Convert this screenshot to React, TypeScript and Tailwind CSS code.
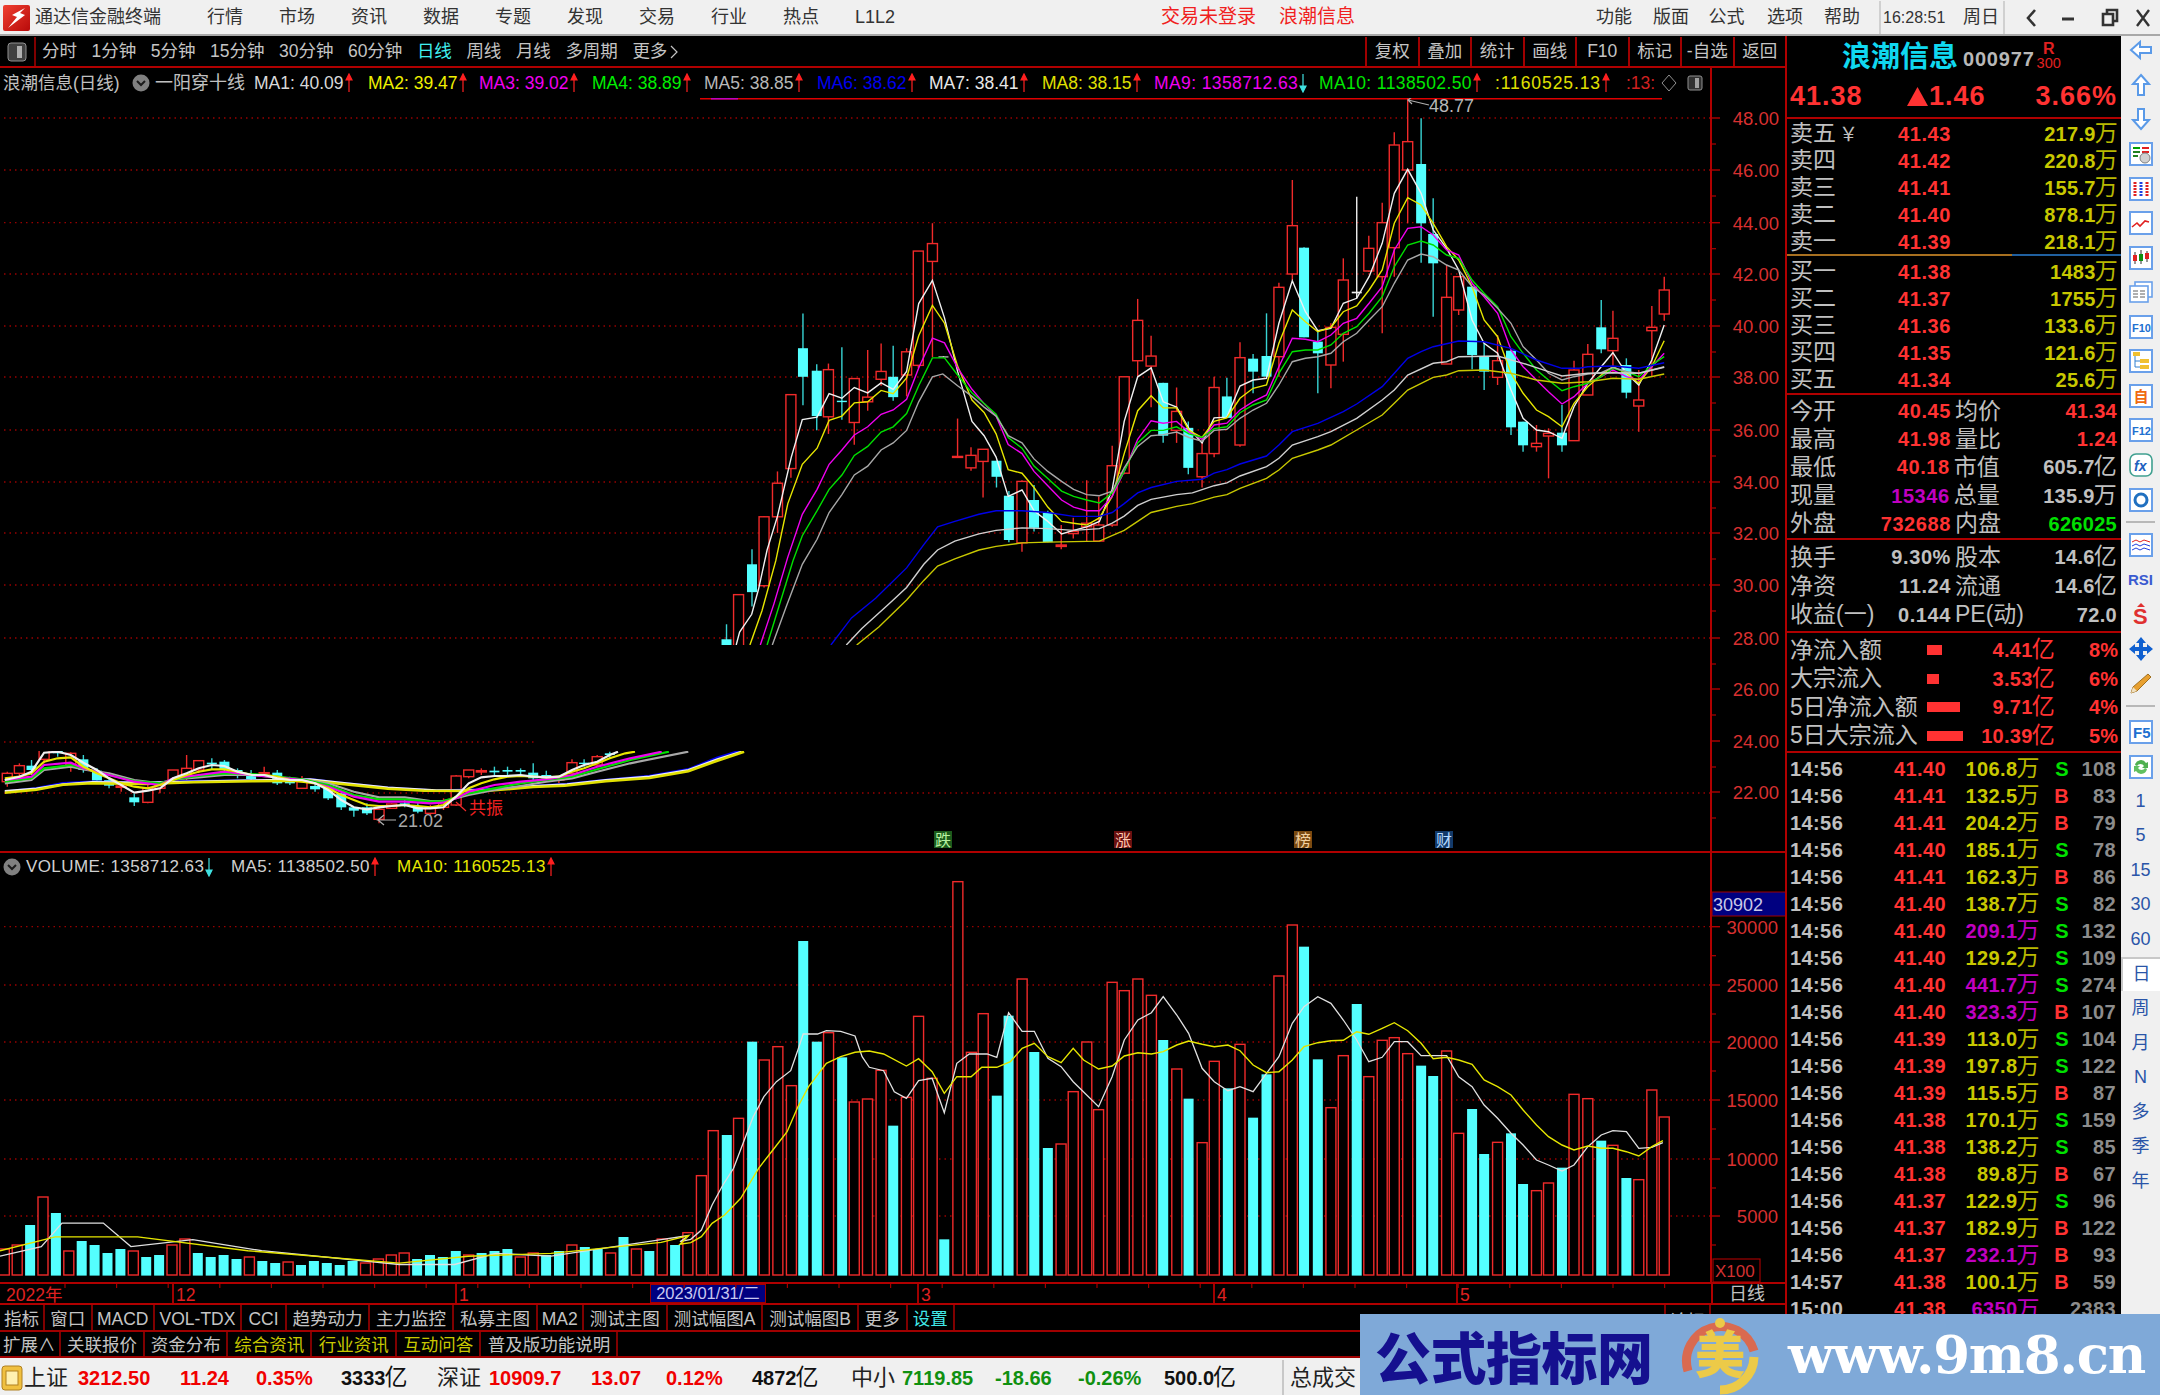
import React from "react";

type P = [number, number];
type C = [number, number, number, number, number, string];
const z8 = (p: number[]): P => [700 + p[0] / 2.904, 100 + p[1] / 2.8];
const z9 = (p: number[]): P => [1240 + p[0] / 2.904, 90 + p[1] / 3];
const z10 = (p: number[]): P => [p[0] / 2.063, 720 + p[1] / 3];
const z11 = (p: number[]): P => [680 + p[0] / 2.8, 860 + p[1] / 3];
const z12 = (p: number[]): P => [1240 + p[0] / 2.904, 860 + p[1] / 3];
const pairs = (a: number[]) => { const o: number[][] = []; for (let i = 0; i < a.length; i += 2) o.push([a[i], a[i + 1]]); return o; };
const pts = (l: P[]) => l.map((p) => p[0].toFixed(1) + "," + p[1].toFixed(1)).join(" ");

const RED = "#f02a2a";
const CY = "#54ffff";

const c8: C[] = [
  [77,1468,1510,1526,1526,"c"],[112,1385,1385,1540,1540,"r"],[151,1258,1300,1378,1418,"c"],[186,1165,1167,1360,1365,"r"],[225,1040,1073,1167,1212,"r"],[264,825,825,1032,1058,"r"],[299,598,695,775,855,"c"],[339,740,758,885,925,"c"],[373,738,755,887,935,"r"],[412,692,842,846,895,"c"],[448,780,780,903,965,"r"],[487,700,832,845,870,"r"],[526,682,760,782,800,"r"],[561,688,775,832,842,"c"],[600,695,705,770,830,"r"],[634,423,423,743,750,"r"],[675,345,402,452,720,"r"],[707,718,718,720,720,"w"],[748,892,998,1000,1000,"r"],[787,972,995,1030,1038,"r"],[822,978,978,1012,1113,"r"],[861,1010,1010,1055,1085,"c"],[897,1095,1108,1232,1238,"c"],[935,1065,1068,1240,1265,"r"],[970,1078,1120,1198,1208,"c"],[1010,1150,1155,1238,1238,"c"],[1049,1190,1246,1250,1258,"r"],[1084,1170,1208,1214,1228,"r"],[1123,1065,1185,1195,1235,"r"],[1158,1110,1190,1235,1235,"r"],[1197,968,1024,1190,1195,"r"],[1232,775,775,1045,1048,"r"],[1271,557,617,730,775,"r"],[1310,660,717,745,860,"r"],[1345,792,792,940,960,"c"],[1384,805,872,925,960,"r"],[1418,900,918,1030,1048,"c"],[1458,960,990,1055,1085,"r"],[1493,775,805,990,1000,"r"],[1530,778,830,890,890,"c"],
];
const c9: C[] = [
  [0,757,803,1065,1070,"r"],[38,792,806,845,910,"c"],[77,670,798,860,860,"c"],[113,578,592,800,860,"r"],[152,270,407,552,570,"r"],[186,472,473,742,742,"c"],[226,725,755,790,910,"c"],[264,700,712,825,895,"r"],[300,505,570,733,815,"r"],[339,320,605,610,625,"w"],[374,437,475,543,545,"r"],[413,338,398,560,730,"r"],[448,127,165,473,560,"r"],[487,25,155,240,400,"r"],[526,85,222,400,518,"c"],[561,325,432,520,680,"c"],[600,525,622,822,822,"r"],[635,560,560,660,675,"r"],[674,590,590,795,838,"c"],[709,760,800,845,900,"c"],[748,735,812,862,885,"r"],[787,780,782,1012,1035,"c"],[822,995,995,1066,1085,"c"],[861,1005,1060,1070,1085,"r"],[896,1015,1030,1038,1165,"r"],[935,945,1028,1066,1085,"c"],[970,812,840,1052,1052,"r"],[1010,762,793,915,915,"r"],[1049,630,712,778,790,"c"],[1083,662,745,782,850,"r"],[1122,805,825,908,925,"c"],[1158,840,930,948,1025,"r"],[1196,648,712,722,860,"r"],[1232,560,600,672,692,"r"],
];
const c10: C[] = [
  [15,155,160,185,200,"r"],[40,130,137,160,175,"r"],[65,120,137,150,165,"c"],[91,35,42,118,130,"r"],[119,40,65,100,110,"c"],[146,97,100,135,155,"r"],[172,105,118,150,158,"c"],[200,145,152,182,190,"c"],[225,175,180,197,205,"c"],[250,190,198,202,215,"r"],[277,222,232,247,258,"c"],[305,195,205,247,250,"r"],[330,190,195,205,220,"r"],[357,150,150,180,190,"r"],[385,105,145,165,180,"r"],[410,120,122,150,160,"r"],[437,115,128,133,150,"c"],[463,120,125,150,155,"c"],[490,145,150,162,175,"c"],[518,150,165,177,180,"c"],[545,140,158,162,170,"r"],[572,150,158,190,195,"c"],[598,170,178,190,195,"c"],[623,168,185,205,205,"r"],[650,185,198,208,215,"c"],[677,195,205,235,240,"c"],[704,220,220,262,270,"c"],[730,262,262,272,290,"c"],[757,250,262,280,285,"c"],[782,265,268,298,310,"r"],[808,250,252,265,265,"r"],[835,240,250,258,262,"c"],[862,250,258,275,280,"c"],[888,255,265,280,285,"r"],[915,235,245,262,270,"r"],[941,165,168,255,258,"r"],[967,150,150,170,175,"r"],[993,145,152,156,165,"r"],[1020,140,152,157,165,"c"],[1047,140,150,155,165,"c"],[1074,145,150,155,162,"c"],[1100,130,158,175,180,"c"],[1127,152,165,175,180,"c"],[1153,170,175,180,190,"r"],[1180,118,128,160,170,"r"],[1205,118,128,132,140,"c"],[1232,105,110,135,140,"r"],[1258,95,100,105,115,"c"],
];

const lines: { c: string; a: number[]; b: number[] }[] = [
  { c: "#f0f0f0", a: [105,1526,115,1490,150,1440,170,1370,195,1260,225,1165,265,1000,297,895,340,888,375,822,412,835,448,805,487,820,526,792,561,810,600,760,635,570,675,505,710,610,748,760,790,900,825,940,860,1000,895,1110,935,1092,970,1150,1010,1180,1050,1215,1085,1205,1123,1195,1160,1180,1197,1090,1232,900,1271,775,1310,750,1345,845,1384,860,1420,920,1458,960,1493,890,1530,888], b: [0,888,38,870,77,865,113,700,152,572,190,665,226,722,264,715,300,640,339,625,375,560,413,460,448,310,487,238,526,310,561,420,600,475,635,540,674,690,709,760,748,790,787,900,822,985,861,1020,896,1025,935,1045,970,950,1010,880,1049,830,1083,788,1122,850,1158,885,1196,810,1232,705] },
  { c: "#e6e600", a: [145,1526,180,1430,220,1290,255,1130,297,1020,340,975,375,897,412,885,448,848,487,845,526,813,561,822,600,778,635,660,675,575,710,625,748,745,790,840,825,875,860,935,895,1035,935,1045,970,1085,1010,1140,1050,1180,1085,1185,1123,1190,1160,1170,1197,1110,1232,990,1271,870,1310,828,1345,862,1384,862,1420,925,1458,945,1493,900,1530,890], b: [0,925,38,895,77,885,113,760,152,660,190,695,226,725,264,712,300,665,339,648,375,600,413,540,448,400,487,323,526,345,561,400,600,470,635,510,674,590,709,690,748,740,787,850,822,910,861,960,896,980,935,1010,970,940,1010,890,1049,855,1083,830,1122,850,1158,880,1196,830,1232,752] },
  { c: "#f000f0", a: [175,1526,215,1410,255,1280,297,1160,340,1090,375,1020,412,980,448,938,487,915,526,880,561,868,600,838,635,750,675,667,710,680,748,750,790,810,825,850,860,885,895,965,935,990,970,1040,1010,1080,1050,1120,1085,1140,1123,1150,1160,1150,1197,1110,1232,1040,1271,950,1310,898,1345,905,1384,900,1420,930,1458,950,1493,910,1530,905], b: [0,960,38,935,77,915,113,830,152,745,190,748,226,755,264,735,300,700,339,685,375,640,413,590,448,480,487,415,526,410,561,435,600,480,635,495,674,580,709,620,748,670,787,780,822,830,861,870,896,905,935,942,970,920,1010,880,1049,860,1083,840,1122,860,1158,870,1196,830,1232,790] },
  { c: "#00e000", a: [195,1526,235,1400,270,1290,297,1220,340,1150,375,1090,412,1050,448,995,487,970,526,930,561,915,600,878,635,800,675,722,710,722,748,770,790,820,825,850,860,880,895,945,935,975,970,1025,1010,1060,1050,1095,1085,1110,1123,1120,1160,1128,1197,1100,1232,1040,1271,960,1310,925,1345,925,1384,915,1420,935,1458,945,1493,920,1530,915], b: [0,968,38,945,77,930,113,850,152,785,190,780,226,780,264,765,300,730,339,710,375,670,413,620,448,530,487,465,526,453,561,465,600,495,635,505,674,570,709,610,748,650,787,740,822,790,861,840,896,870,935,902,970,890,1010,880,1049,860,1083,835,1122,845,1158,860,1196,825,1232,800] },
  { c: "#a8a8a8", a: [210,1526,250,1420,297,1300,340,1230,375,1155,412,1105,448,1050,487,1025,526,980,561,960,600,925,635,845,675,775,705,767,748,800,790,830,825,860,860,885,895,940,935,960,970,1005,1010,1040,1050,1068,1085,1090,1123,1105,1160,1108,1197,1095,1232,1030,1271,970,1310,940,1345,937,1384,930,1420,945,1458,955,1493,925,1530,922], b: [0,985,38,960,77,940,113,885,152,815,190,805,226,800,264,790,300,755,339,730,375,690,413,650,448,580,487,510,526,492,561,500,600,525,635,540,674,590,709,615,748,655,787,700,822,770,861,810,896,850,935,870,970,860,1010,852,1049,848,1083,832,1122,845,1158,850,1196,840,1232,830] },
  { c: "#0000e8", a: [380,1526,440,1450,510,1395,600,1310,650,1245,690,1195,740,1180,810,1160,860,1150,935,1150,1010,1155,1085,1166,1160,1166,1197,1155,1232,1130,1271,1100,1310,1085,1384,1068,1458,1062,1493,1045,1530,1035], b: [0,1122,77,1098,113,1065,152,1025,226,1000,300,965,339,942,413,890,448,850,487,805,526,785,561,770,635,753,709,755,787,775,861,810,935,835,985,835,1010,830,1083,828,1158,835,1232,818] },
  { c: "#d0d0d0", a: [425,1526,470,1480,550,1410,600,1365,650,1300,690,1260,740,1235,810,1215,860,1205,935,1198,1010,1200,1085,1205,1160,1200,1197,1185,1232,1165,1271,1135,1310,1118,1384,1105,1430,1100,1493,1080,1530,1072], b: [0,1158,77,1130,113,1105,152,1065,226,1040,264,1025,339,985,413,930,448,900,487,855,561,820,600,815,635,800,748,798,822,820,896,845,935,858,1010,850,1083,848,1158,850,1232,832] },
  { c: "#c8c800", a: [455,1526,520,1475,600,1400,650,1345,690,1305,740,1285,810,1260,860,1250,935,1240,1010,1238,1160,1235,1232,1205,1271,1180,1310,1155,1384,1138,1430,1130,1493,1112,1530,1105], b: [0,1195,77,1165,113,1140,152,1105,226,1080,264,1065,339,1020,413,975,448,940,487,900,561,862,600,855,635,842,709,840,787,850,861,870,935,880,1010,875,1083,865,1158,868,1232,852] },
];

const leftLines: { c: string; a: number[]; w: number }[] = [
  { c: "#0000e8", w: 2.4, a: [10,215,75,205,130,190,190,185,300,188,400,183,520,182,640,178,700,188,800,203,900,212,1000,208,1100,198,1170,192,1250,180,1340,168,1420,148,1480,113,1525,93] },
  { c: "#f0f0f0", w: 2.2, a: [10,213,75,206,130,193,190,186,300,188,400,185,520,181,640,178,700,188,800,203,900,211,1000,210,1100,198,1170,193,1250,180,1340,170,1420,150,1480,118,1530,95] },
  { c: "#e0e000", w: 2.6, a: [10,218,75,209,130,194,190,190,300,192,400,187,520,184,640,182,700,191,800,206,875,212,1000,213,1100,201,1165,197,1250,184,1340,174,1420,154,1480,122,1535,95] },
  { c: "#a8a8a8", w: 2.2, a: [10,190,65,180,91,150,146,140,172,148,225,160,277,180,330,190,357,178,410,172,463,165,520,165,572,172,623,178,677,190,730,215,782,232,835,232,888,243,915,243,941,235,967,225,1020,210,1074,198,1127,185,1180,175,1232,155,1300,130,1420,95] },
  { c: "#00e000", w: 2.2, a: [10,185,65,175,91,145,146,135,172,145,225,165,277,183,330,190,357,178,410,168,463,160,520,162,572,170,623,178,677,195,730,225,782,238,835,238,888,245,915,243,941,232,967,220,1020,205,1074,190,1127,180,1180,170,1232,148,1300,120,1380,95] },
  { c: "#f000f0", w: 2.2, a: [10,180,65,170,91,135,146,128,172,145,225,165,277,185,330,195,357,175,410,165,463,155,520,165,572,172,623,180,677,200,730,230,782,245,835,245,888,250,915,248,941,235,967,215,1020,195,1074,185,1127,178,1180,165,1232,140,1300,115,1365,95] },
  { c: "#e6e600", w: 2.2, a: [10,175,40,170,65,160,91,125,119,115,146,112,172,140,200,160,225,175,250,190,277,200,305,205,330,195,357,180,385,165,410,155,437,148,463,148,490,155,520,165,545,165,572,170,598,180,623,185,650,190,677,205,704,225,730,240,757,255,782,258,808,258,835,255,862,258,888,262,915,255,941,230,967,205,993,190,1020,178,1047,170,1074,168,1100,170,1127,172,1153,170,1180,155,1205,145,1232,130,1258,115,1290,100,1310,95] },
  { c: "#f0f0f0", w: 2.2, a: [10,180,40,170,65,155,91,98,119,95,146,105,172,128,200,150,225,175,250,195,277,218,305,212,330,205,357,175,385,160,410,145,437,135,463,138,490,155,520,165,545,165,572,175,598,180,623,180,650,190,677,210,704,240,730,262,757,268,782,262,808,258,835,255,862,265,888,265,915,262,941,230,967,190,993,172,1020,168,1047,168,1074,165,1100,170,1127,172,1153,170,1180,150,1205,135,1232,125,1258,105,1275,95] },
];

const v11: [number, number, string][] = [[22,1118,"r"],[60,947,"r"],[93,812,"r"],[131,825,"c"],[164,775,"r"],[202,545,"c"],[236,600,"r"],[274,560,"r"],[312,677,"r"],[345,243,"c"],[383,545,"c"],[416,518,"r"],[454,592,"c"],[488,726,"r"],[525,717,"r"],[563,631,"r"],[597,797,"c"],[634,712,"r"],[668,469,"r"],[706,655,"r"],[740,1138,"c"],[778,65,"r"],[816,577,"r"],[849,461,"r"],[887,707,"c"],[920,467,"c"],[958,357,"r"],[992,576,"c"],[1030,864,"c"],[1067,852,"r"],[1101,695,"r"],[1139,546,"r"],[1172,749,"r"],[1210,367,"r"],[1244,392,"r"],[1282,357,"r"],[1320,406,"r"],[1353,540,"c"],[1391,627,"r"],[1424,716,"c"],[1462,848,"r"],[1496,604,"r"],[1534,685,"c"]];
const v12: [number, number, string][] = [[0,553,"r"],[38,773,"c"],[77,643,"c"],[113,348,"r"],[152,195,"r"],[186,260,"c"],[226,598,"c"],[264,743,"r"],[300,587,"r"],[339,432,"c"],[374,650,"r"],[413,541,"r"],[448,533,"r"],[487,581,"r"],[526,617,"c"],[561,648,"c"],[600,573,"r"],[635,820,"r"],[674,747,"c"],[709,882,"c"],[748,847,"r"],[787,820,"c"],[822,972,"c"],[861,992,"r"],[896,969,"r"],[935,923,"c"],[970,703,"r"],[1010,716,"r"],[1049,842,"c"],[1083,856,"r"],[1122,954,"c"],[1158,959,"r"],[1196,690,"r"],[1232,771,"r"]];
const vLeft: [number, string][] = [[26,"r"],[30,"r"],[50,"c"],[78,"r"],[62,"c"],[24,"r"],[34,"c"],[30,"c"],[22,"c"],[26,"c"],[24,"r"],[18,"c"],[20,"c"],[30,"r"],[36,"r"],[22,"c"],[18,"c"],[20,"c"],[16,"c"],[18,"r"],[14,"c"],[12,"c"],[13,"r"],[10,"c"],[14,"c"],[12,"c"],[10,"c"],[14,"c"],[12,"r"],[16,"r"],[20,"r"],[22,"r"],[16,"c"],[20,"c"],[18,"c"],[24,"c"],[20,"r"],[22,"c"],[24,"c"],[26,"c"],[18,"r"],[22,"r"],[20,"c"],[24,"c"],[30,"r"],[28,"c"],[26,"c"],[22,"r"],[38,"c"],[26,"r"],[24,"c"],[36,"r"],[30,"c"]];

const volW = [0,1145,30,1138,60,1110,90,1035,120,975,150,925,180,840,205,770,235,710,270,665,310,632,330,570,345,522,385,522,410,512,450,514,490,528,510,590,530,622,570,632,600,695,634,715,668,662,706,655,740,758,775,610,810,582,860,582,887,592,920,458,958,514,992,514,1030,595,1067,620,1101,665,1172,740,1210,650,1244,540,1282,480,1320,458,1353,410,1391,465,1424,520,1462,625,1496,665,1534,692];
const volW2 = [0,680,38,695,77,640,113,590,152,490,186,440,226,410,264,430,300,480,339,540,374,605,413,592,448,545,487,545,526,587,600,587,635,650,674,680,709,735,748,775,787,820,822,855,861,900,896,915,935,933,970,915,1010,860,1049,825,1083,812,1122,815,1158,865,1196,862,1228,848];
const volY = [0,1153,30,1148,60,1130,90,1090,125,1065,170,1015,220,925,260,870,300,815,330,740,360,680,410,610,450,590,490,577,530,573,570,582,634,618,668,596,706,635,740,700,775,650,815,650,845,622,887,622,925,605,958,565,992,550,1030,590,1067,608,1101,565,1130,600,1172,627,1210,618,1244,588,1282,578,1320,582,1353,575,1391,555,1424,543,1462,553,1496,560,1534,555];
const volY2 = [0,572,38,615,77,638,113,635,152,600,186,560,226,548,264,542,300,541,339,515,374,523,413,505,448,488,487,512,526,550,561,596,600,592,635,600,674,613,709,660,748,680,787,705,822,750,861,795,896,830,935,855,970,870,1010,858,1049,865,1083,865,1122,875,1158,888,1196,860,1228,842];
const ov = (a: number[]): P[] => pairs(a).map((p) => [p[0] / 0.726, p[1] / 0.726] as P);
const volWL = ov([0,912,30,905,45,888,75,888,95,905,140,900,190,908,290,918,330,918,360,910,400,912,480,900,500,897]);
const volYL = ov([0,908,40,898,100,898,180,908,290,917,340,912,400,910,480,902,500,897]);

function Candle({ c, conv, w = 10 }: { c: C; conv: (p: number[]) => P; w?: number }) {
  const [zx, hi, top, bot, lo, t] = c;
  const x = conv([zx, 0])[0];
  const yh = conv([0, hi])[1], yt = conv([0, top])[1], yb = conv([0, bot])[1], yl = conv([0, lo])[1];
  const col = t === "r" ? RED : t === "w" ? "#f0f0f0" : "#38d4d4";
  const body = Math.max(yb - yt, 1);
  return (
    <g>
      <line x1={x} x2={x} y1={yh} y2={yl} stroke={col} strokeWidth={1.4} />
      {t === "r" ? <rect x={x - w / 2} y={yt} width={w} height={body} fill="#000" stroke={RED} strokeWidth={1.4} /> : t === "w" ? <rect x={x - w / 2} y={yt} width={w} height={body} fill="#f0f0f0" /> : <rect x={x - w / 2} y={yt} width={w} height={body} fill={CY} />}
    </g>
  );
}

const PY = [[118,"48.00"],[170,"46.00"],[222.7,"44.00"],[274,"42.00"],[326,"40.00"],[377,"38.00"],[430,"36.00"],[482,"34.00"],[533,"32.00"],[585,"30.00"],[638,"28.00"],[689,"26.00"],[741,"24.00"],[792,"22.00"]] as [number, string][];
const DOT = { stroke: "#980000", strokeWidth: 1.3, strokeDasharray: "1.5 4" };

function PriceChart() {
  return (
    <svg width={1787} height={753} viewBox="0 98 1787 753" className="block shrink-0">
      <defs>
        <clipPath id="up"><rect x={0} y={98} width={1711} height={547} /></clipPath>
        <clipPath id="lowp"><rect x={0} y={751} width={1711} height={100} /></clipPath>
      </defs>
      {PY.filter((p) => p[0] < 640).map((p) => <line key={p[1]} x1={4} x2={1710} y1={p[0]} y2={p[0]} {...DOT} />)}
      <line x1={4} x2={537} y1={742} y2={742} {...DOT} />
      <line x1={4} x2={1710} y1={793} y2={793} {...DOT} />
      <line x1={700} x2={1662} y1={98.5} y2={98.5} stroke="#e00000" strokeWidth={2} />
      <line x1={711} x2={738} y1={98.5} y2={98.5} stroke="#c000c0" strokeWidth={2} />
      <g clipPath="url(#up)">
        {c8.map((c, i) => <Candle key={"a" + i} c={c} conv={z8} />)}
        {c9.map((c, i) => <Candle key={"b" + i} c={c} conv={z9} />)}
        {lines.map((l, i) => <polyline key={i} points={pts([...pairs(l.a).map(z8), ...pairs(l.b).map(z9)])} fill="none" stroke={l.c} strokeWidth={1.4} />)}
      </g>
      <g clipPath="url(#lowp)">
        {c10.map((c, i) => <Candle key={"c" + i} c={c} conv={z10} />)}
        {leftLines.map((l, i) => <polyline key={i} points={pts(pairs(l.a).map(z10))} fill="none" stroke={l.c} strokeWidth={l.w} />)}
      </g>
      <polyline points="1408,100 1429,105" fill="none" stroke="#b0b0b0" strokeWidth={1.2} />
      <polyline points="1412,97 1408,100 1412,104" fill="none" stroke="#b0b0b0" strokeWidth={1.2} />
      <text x={1429} y={112} fontSize={18} fill="#b8b8b8">48.77</text>
      <polyline points="396,820 378,820 384,815" fill="none" stroke="#b0b0b0" strokeWidth={1.2} />
      <polyline points="384,825 378,820" fill="none" stroke="#b0b0b0" strokeWidth={1.2} />
      <text x={398} y={827} fontSize={18} fill="#a8a8a8">21.02</text>
      <line x1={456} y1={802} x2={466} y2={811} stroke={RED} strokeWidth={1.2} />
      <text x={469} y={814} fontSize={17} fill="#f02020">共振</text>
      {[[934,"跌","#1c5a1c","#b6f0a0"],[1114,"涨","#6a1010","#ffc8b0"],[1294,"榜","#7a4a10","#f0d0a0"],[1435,"财","#123a6a","#b8dcff"]].map((t) => (
        <g key={t[1] as string}>
          <rect x={t[0] as number} y={831} width={18} height={17} fill={t[2] as string} />
          <text x={(t[0] as number) + 1} y={846} fontSize={16} fill={t[3] as string}>{t[1]}</text>
        </g>
      ))}
      <line x1={1711} x2={1711} y1={98} y2={851} stroke="#b00000" strokeWidth={2} />
      {PY.map((p) => (
        <g key={p[1]}>
          <line x1={1711} x2={1720} y1={p[0]} y2={p[0]} stroke="#b00000" strokeWidth={1.4} />
          <line x1={1711} x2={1716} y1={p[0] + 26} y2={p[0] + 26} stroke="#b00000" strokeWidth={1.2} />
          <text x={1779} y={p[0] + 7} fontSize={18.5} textAnchor="end" fill="#d83030">{p[1]}</text>
        </g>
      ))}
    </svg>
  );
}

const VY = [[926.7,"30000"],[985,"25000"],[1042,"20000"],[1100,"15000"],[1159,"10000"],[1216,"5000"]] as [number, string][];

function VolBar({ x, top, t, w = 10 }: { x: number; top: number; t: string; w?: number }) {
  return t === "r"
    ? <rect x={x - w / 2} y={top} width={w} height={1275 - top} fill="#000" stroke={RED} strokeWidth={1.4} />
    : <rect x={x - w / 2} y={top} width={w} height={1275.6 - top} fill={CY} />;
}

function VolumeChart() {
  return (
    <svg width={1787} height={402} viewBox="0 880 1787 402" className="block shrink-0">
      {VY.map((p) => <line key={p[1]} x1={4} x2={1710} y1={p[0]} y2={p[0]} {...DOT} />)}
      {vLeft.map((b, i) => <VolBar key={"l" + i} x={688 - 12.9 * (53 - i)} top={1275 - b[0]} t={b[1]} />)}
      {v11.map((b, i) => <VolBar key={"m" + i} x={680 + b[0] / 2.8} top={860 + b[1] / 3} t={b[2]} />)}
      {v12.map((b, i) => <VolBar key={"n" + i} x={1240 + b[0] / 2.904} top={860 + b[1] / 3} t={b[2]} />)}
      <polyline points={pts([...volWL, ...pairs(volW).map(z11), ...pairs(volW2).map(z12)])} fill="none" stroke="#e0e0e0" strokeWidth={1.3} />
      <polyline points={pts([...volYL, ...pairs(volY).map(z11), ...pairs(volY2).map(z12)])} fill="none" stroke="#e6e600" strokeWidth={1.4} />
      <line x1={1711} x2={1711} y1={880} y2={1282} stroke="#b00000" strokeWidth={2} />
      <rect x={1712} y={892} width={75} height={24} fill="#000080" stroke="#a00000" />
      <text x={1713} y={911} fontSize={18} fill="#c8c8e8">30902</text>
      {VY.map((p) => (
        <g key={p[1]}>
          <line x1={1711} x2={1720} y1={p[0]} y2={p[0]} stroke="#b00000" strokeWidth={1.4} />
          <line x1={1711} x2={1716} y1={p[0] + 29} y2={p[0] + 29} stroke="#b00000" strokeWidth={1.2} />
          <text x={1778} y={p[0] + 7} fontSize={18.5} textAnchor="end" fill="#d83030">{p[1]}</text>
        </g>
      ))}
      <rect x={1713} y={1259} width={47} height={23} fill="none" stroke="#a00000" strokeWidth={1.2} />
      <text x={1715} y={1277} fontSize={17} fill="#d03030">X100</text>
    </svg>
  );
}

function Up({ c = "#ff2020" }: { c?: string }) {
  return (
    <svg width={8} height={20} viewBox="0 0 8 20" className="ml-[1px] shrink-0">
      <path d="M4 19V2M1 7l3-6 3 6z" stroke={c} fill={c} strokeWidth={1.2} />
    </svg>
  );
}
function Dn({ c = "#40e0e0" }: { c?: string }) {
  return (
    <svg width={8} height={20} viewBox="0 0 8 20" className="ml-[1px] shrink-0">
      <path d="M4 1v17M1 13l3 6 3-6z" stroke={c} fill={c} strokeWidth={1.2} />
    </svg>
  );
}

function Circle({ size = 18 }: { size?: number }) {
  return (
    <svg width={size} height={size} viewBox="0 0 18 18" className="shrink-0">
      <circle cx={9} cy={9} r={8.5} fill="#808080" />
      <path d="M5 7l4 4 4-4" stroke="#1a1a1a" strokeWidth={2} fill="none" />
    </svg>
  );
}

const MA: [string, string, number, boolean, string][] = [
  ["MA1: 40.09", "#d8d8d8", 114, true, ""],
  ["MA2: 39.47", "#f0f000", 111, true, ""],
  ["MA3: 39.02", "#f000f0", 113, true, ""],
  ["MA4: 38.89", "#00f000", 112, true, ""],
  ["MA5: 38.85", "#b8b8b8", 113, true, ""],
  ["MA6: 38.62", "#0000f0", 112, true, ""],
  ["MA7: 38.41", "#e8e8e8", 113, true, ""],
  ["MA8: 38.15", "#e0e000", 112, true, ""],
  ["MA9: 1358712.63", "#f000f0", 165, false, "tracking-[0.4px]"],
  ["MA10: 1138502.50", "#00e800", 176, true, "tracking-[0.4px]"],
  [":1160525.13", "#e0e000", 131, true, "tracking-[0.9px]"],
];

const toolsL: [string, boolean][] = [["分时", false], ["1分钟", false], ["5分钟", false], ["15分钟", false], ["30分钟", false], ["60分钟", false], ["日线", true], ["周线", false], ["月线", false], ["多周期", false]];
const toolsR = ["复权", "叠加", "统计", "画线", "F10", "标记", "-自选", "返回"];
const menu = ["行情", "市场", "资讯", "数据", "专题", "发现", "交易", "行业", "热点", "L1L2"];
const menuR: [string, number][] = [["功能", 57], ["版面", 55.5], ["公式", 58.5], ["选项", 57], ["帮助", 55]];

function TitleBar() {
  return (
    <div className="flex items-center h-[36px] pt-[1px] bg-[#f0f0f0] border-b-2 border-[#a8a8a8] text-[18px] text-[#333] shrink-0 relative">
      <svg width={27} height={26} viewBox="0 0 27 26" className="ml-[3px] shrink-0">
        <defs><linearGradient id="lg" x1="0" y1="0" x2="1" y2="1"><stop offset="0" stopColor="#f04030" /><stop offset="1" stopColor="#b80a0a" /></linearGradient></defs>
        <rect width={27} height={26} rx={2} fill="url(#lg)" />
        <path d="M22 3L9 10l5 2-9 11 17-13-5-2z" fill="#fff" />
      </svg>
      <span className="ml-[5px] w-[172px] whitespace-nowrap shrink-0">通达信金融终端</span>
      <div className="flex shrink-0">
        {menu.map((m) => <span key={m} className="w-[72px] whitespace-nowrap">{m}</span>)}
      </div>
      <div className="flex text-[19px] text-[#f02020] ml-[234px] gap-[23px] whitespace-nowrap shrink-0">
        <span>交易未登录</span><span>浪潮信息</span>
      </div>
      <div className="flex ml-[241px] shrink-0">
        {menuR.map((m) => <span key={m[0]} className="whitespace-nowrap" style={{ width: m[1] }}>{m[0]}</span>)}
      </div>
      <div className="h-full border-l-2 border-[#d0d0d0] flex items-center pl-[2px] text-[16px] w-[84px] shrink-0">16:28:51</div>
      <div className="h-full w-[40px] flex items-center whitespace-nowrap text-[18px] shrink-0">周日</div>
      <div className="h-full border-l-2 border-[#d0d0d0] flex items-center flex-1">
        <svg width={157} height={24} viewBox="0 0 157 24" className="shrink-0">
          <path d="M30 4l-7 8 7 8" stroke="#333" strokeWidth={2.6} fill="none" />
          <path d="M57 13h12" stroke="#333" strokeWidth={3} />
          <path d="M98 8h10v11H98zM102 8V4h10v11h-4" stroke="#333" strokeWidth={2.6} fill="none" />
          <path d="M132 4l12 16M144 4l-12 16" stroke="#333" strokeWidth={2.4} />
        </svg>
      </div>
    </div>
  );
}

function ToolBar() {
  return (
    <div className="flex h-[32px] pt-[1px] border-b-2 border-[#b00000] text-[17.5px] text-[#c4c4c4] shrink-0">
      <div className="w-[36px] border-r-2 border-[#800000] flex items-center justify-center shrink-0">
        <svg width={20} height={20} viewBox="0 0 20 20">
          <rect x={1} y={1} width={18} height={18} rx={3} fill="#404040" stroke="#909090" />
          <rect x={10} y={4} width={5} height={12} fill="#b0b0b0" />
        </svg>
      </div>
      <div className="flex items-center gap-[14.5px] ml-[6px] whitespace-nowrap">
        {toolsL.map((t) => <span key={t[0]} className={t[1] ? "text-[#40f0f0]" : ""}>{t[0]}</span>)}
        <span className="flex items-center">更多
          <svg width={10} height={18} viewBox="0 0 10 18" className="ml-[2px]"><path d="M2 3l6 6-6 6" stroke="#c4c4c4" fill="none" strokeWidth={1.2} /></svg>
        </span>
      </div>
      <div className="flex ml-auto">
        {toolsR.map((t) => <div key={t} className="w-[52.5px] border-l-2 border-[#a00000] flex items-center justify-center whitespace-nowrap">{t}</div>)}
      </div>
    </div>
  );
}

function Legend() {
  return (
    <div className="flex items-center h-[30px] w-[1712px] border-r-2 border-[#b00000] text-[17.5px] whitespace-nowrap shrink-0">
      <span className="text-[#c0c0c0] ml-[3px] w-[129px] shrink-0">浪潮信息(日线)</span>
      <Circle />
      <span className="text-[#c0c0c0] ml-[5px] w-[99px] text-[18px] shrink-0">一阳穿十线</span>
      {MA.map((m) => (
        <span key={m[0]} className={"flex items-center shrink-0 " + m[4]} style={{ width: m[2], color: m[1] }}>
          {m[0]}{m[3] ? <Up /> : <Dn />}
        </span>
      ))}
      <span className="text-[#d02020] w-[34px] shrink-0">:13:</span>
      <svg width={18} height={20} viewBox="0 0 18 20" className="shrink-0"><path d="M9 2l7 8-7 8-7-8z" fill="none" stroke="#909090" /></svg>
      <svg width={16} height={20} viewBox="0 0 16 20" className="ml-[9px] shrink-0"><rect x={1} y={3} width={14} height={14} rx={2} fill="#303030" stroke="#909090" /><rect x={8} y={5} width={4} height={10} fill="#a0a0a0" /></svg>
    </div>
  );
}

function AxisRow() {
  const ticks: number[] = [];
  for (let x = 65; x < 1700; x += 51.6) ticks.push(x);
  return (
    <div className="flex h-[23px] border-t-2 border-b-2 border-[#b00000] text-[17.5px] text-[#e02020] shrink-0 relative">
      <svg width={1711} height={5} viewBox="0 0 1711 5" className="absolute left-0 top-0">
        {ticks.map((x) => <line key={x} x1={x} x2={x} y1={0} y2={4} stroke="#a00000" strokeWidth={1.2} />)}
      </svg>
      <div className="w-[172px] pl-[6px] pt-[3px] flex items-center shrink-0">2022年</div>
      <div className="w-[283px] border-l-2 border-[#a00000] pl-[2px] pt-[3px] flex items-center shrink-0">12</div>
      <div className="w-[195px] border-l-2 border-[#a00000] pl-[2px] pt-[3px] flex items-center shrink-0">1</div>
      <div className="w-[116px] bg-[#000080] text-[#c8c8f0] border border-[#a00000] text-[16.5px] flex items-center justify-center whitespace-nowrap shrink-0">2023/01/31/二</div>
      <div className="w-[151px] shrink-0" />
      <div className="w-[296px] border-l-2 border-[#a00000] pl-[2px] pt-[3px] flex items-center shrink-0">3</div>
      <div className="w-[243px] border-l-2 border-[#a00000] pl-[2px] pt-[3px] flex items-center shrink-0">4</div>
      <div className="w-[255px] border-l-2 border-[#a00000] pl-[2px] pt-[3px] flex items-center shrink-0">5</div>
      <div className="w-[76px] border-l-2 border-[#b00000] text-[#c0c0c0] text-[18px] pl-[16px] pt-[2px] flex items-center shrink-0 whitespace-nowrap">日线</div>
    </div>
  );
}

const TAB1: [string, number, string?][] = [["指标", 45], ["窗口", 47.5], ["MACD", 62.5], ["VOL-TDX", 87], ["CCI", 45], ["趋势动力", 83], ["主力监控", 84], ["私募主图", 84], ["MA2", 45.5], ["测试主图", 84.5], ["测试幅图A", 95], ["测试幅图B", 96], ["更多", 48.5], ["设置", 47.5, "#40e8e8"]];
const TAB2: [string, number, string?][] = [["扩展∧", 60.6], ["关联报价", 84.8], ["资金分布", 82.6], ["综合资讯", 84.5, "#c8c800"], ["行业资讯", 84.5, "#c8c800"], ["互动问答", 84.5, "#c8c800"], ["普及版功能说明", 137]];

function Tabs({ items, right }: { items: [string, number, string?][]; right?: boolean }) {
  return (
    <div className="flex h-[26.5px] border-b-2 border-[#a00000] text-[17.5px] text-[#c4c4c4] shrink-0 whitespace-nowrap">
      {items.map((t) => (
        <div key={t[0]} className="border-r-2 border-[#800000] flex items-center justify-center shrink-0 pt-[3px]" style={{ width: t[1], color: t[2] }}>{t[0]}</div>
      ))}
      {right ? <div className="ml-[709px] w-[47px] border-l-2 border-r-2 border-[#800000] text-center text-[#c0c0c0] pt-[3px]">论坛</div> : null}
    </div>
  );
}

const QUOTE: [string, string, string][] = [
  ["卖五", "41.43", "217.9"], ["卖四", "41.42", "220.8"], ["卖三", "41.41", "155.7"], ["卖二", "41.40", "878.1"], ["卖一", "41.39", "218.1"],
];
const BUY: [string, string, string][] = [
  ["买一", "41.38", "1483"], ["买二", "41.37", "1755"], ["买三", "41.36", "133.6"], ["买四", "41.35", "121.6"], ["买五", "41.34", "25.6"],
];

function Wan({ c = "#b8b800" }: { c?: string }) {
  return <span className="text-[23px] font-normal leading-none -ml-[1px]" style={{ color: c }}>万</span>;
}

function QRow({ r }: { r: [string, string, string] }) {
  return (
    <div className="flex items-center h-[27px]">
      <span className="text-[23px] text-[#c0c0c0] w-[99px] pl-[3px] whitespace-nowrap leading-none relative">
        {r[0]}{r[0] === "卖五" ? <span className="text-[19px] ml-[3px]">￥</span> : null}
      </span>
      <span className="text-[20px] font-bold text-[#ff3232] w-[65px] text-right tracking-[0.6px]">{r[1]}</span>
      <span className="flex-1 text-right text-[20px] font-bold text-[#c8c800] pr-[3px] tracking-[0.3px] whitespace-nowrap flex justify-end items-center">{r[2]}<Wan /></span>
    </div>
  );
}

const INFO: [string, string, string, string, string, string][] = [
  ["今开", "40.45", "#ff3232", "均价", "41.34", "#ff3232"],
  ["最高", "41.98", "#ff3232", "量比", "1.24", "#ff3232"],
  ["最低", "40.18", "#ff3232", "市值", "605.7亿", "#c0c0c0"],
  ["现量", "15346", "#c000c0", "总量", "135.9万", "#c0c0c0"],
  ["外盘", "732688", "#ff3232", "内盘", "626025", "#00e000"],
];
const INFO2: [string, string, string, string, string, string][] = [
  ["换手", "9.30%", "#c0c0c0", "股本", "14.6亿", "#c0c0c0"],
  ["净资", "11.24", "#c0c0c0", "流通", "14.6亿", "#c0c0c0"],
  ["收益(一)", "0.144", "#c0c0c0", "PE(动)", "72.0", "#c0c0c0"],
];

function Num({ v }: { v: string }) {
  const m = v.match(/^(.*?)([亿万])$/);
  if (!m) return <>{v}</>;
  return <>{m[1]}<span className="text-[23px] font-normal leading-none -ml-[1px]">{m[2]}</span></>;
}

function IRow({ r, h }: { r: [string, string, string, string, string, string]; h: string }) {
  return (
    <div className={"flex items-center whitespace-nowrap " + h}>
      <span className="text-[23px] text-[#c0c0c0] w-[90px] pl-[3px] leading-none">{r[0]}</span>
      <span className="text-[20px] font-bold w-[74px] text-right tracking-[0.6px]" style={{ color: r[2] }}>{r[1]}</span>
      <span className="text-[23px] text-[#c0c0c0] ml-[4px] w-[90px] leading-none">{r[3]}</span>
      <span className="flex-1 text-right text-[20px] font-bold pr-[4px] tracking-[0.3px]" style={{ color: r[5] }}><Num v={r[4]} /></span>
    </div>
  );
}

const FLOW: [string, number, string, string][] = [
  ["净流入额", 15, "4.41", "8%"], ["大宗流入", 12, "3.53", "6%"], ["5日净流入额", 33, "9.71", "4%"], ["5日大宗流入", 36, "10.39", "5%"],
];

type Tick = [string, string, string, boolean, string, string];
const T: Tick[] = [
  ["14:56","41.40","106.8",false,"S","108"],["14:56","41.41","132.5",false,"B","83"],["14:56","41.41","204.2",false,"B","79"],["14:56","41.40","185.1",false,"S","78"],["14:56","41.41","162.3",false,"B","86"],["14:56","41.40","138.7",false,"S","82"],["14:56","41.40","209.1",true,"S","132"],["14:56","41.40","129.2",false,"S","109"],["14:56","41.40","441.7",true,"S","274"],["14:56","41.40","323.3",true,"B","107"],["14:56","41.39","113.0",false,"S","104"],["14:56","41.39","197.8",false,"S","122"],["14:56","41.39","115.5",false,"B","87"],["14:56","41.38","170.1",false,"S","159"],["14:56","41.38","138.2",false,"S","85"],["14:56","41.38","89.8",false,"B","67"],["14:56","41.37","122.9",false,"S","96"],["14:56","41.37","182.9",false,"B","122"],["14:56","41.37","232.1",true,"B","93"],["14:57","41.38","100.1",false,"B","59"],["15:00","41.38","6350",true,"","2383"],
];

function RightPanel() {
  return (
    <div className="w-[336px] shrink-0 border-l-2 border-[#b00000] h-[1322px] overflow-hidden">
      <div className="flex items-center h-[43px] pl-[55px] whitespace-nowrap">
        <span className="text-[29px] leading-none text-[#10d8f0] font-bold">浪潮信息</span>
        <span className="text-[20px] font-bold text-[#b8b8b8] ml-[5px] tracking-[0.8px] mt-[3px]">000977</span>
        <span className="flex flex-col items-center leading-none text-[#e02020] ml-[2px] -mt-[4px]">
          <span className="text-[16px] font-bold leading-[14px]">R</span>
          <span className="text-[14.5px] leading-[14px]">300</span>
        </span>
      </div>
      <div className="flex items-center h-[40px] pb-[3px] border-b-2 border-[#b00000] text-[27px] font-bold text-[#ff3232] tracking-[1px] whitespace-nowrap">
        <span className="w-[120px] pl-[3px]">41.38</span>
        <span className="flex items-center w-[123px]">
          <svg width={21} height={21} viewBox="0 0 21 21" className="mr-[1px]"><path d="M10.5 1L21 20H0z" fill="#ff3232" /></svg>1.46
        </span>
        <span className="flex-1 text-right pr-[4px]">3.66%</span>
      </div>
      <div className="h-[135px] pt-[1px] overflow-hidden">{QUOTE.map((r) => <QRow key={r[0]} r={r} />)}</div>
      <div className="flex h-[2px]"><div className="w-[225px] bg-[#a87020]" /><div className="flex-1 bg-[#2060a0]" /></div>
      <div className="h-[137px] pt-[2px] overflow-hidden">{BUY.map((r) => <QRow key={r[0]} r={r} />)}</div>
      <div className="h-[2px] bg-[#b00000]" />
      <div className="h-[143px] pt-[2px] overflow-hidden">{INFO.map((r) => <IRow key={r[0]} r={r} h="h-[28.2px]" />)}</div>
      <div className="h-[2px] bg-[#b00000]" />
      <div className="h-[91px] pt-[3px] overflow-hidden">{INFO2.map((r) => <IRow key={r[0]} r={r} h="h-[28.7px]" />)}</div>
      <div className="h-[2px] bg-[#b00000]" />
      <div className="h-[118px] pt-[3px] overflow-hidden">
        {FLOW.map((f) => (
          <div key={f[0]} className="flex items-center h-[28.5px] whitespace-nowrap">
            <span className="text-[23px] text-[#c0c0c0] w-[140px] pl-[3px] leading-none">{f[0]}</span>
            <span className="w-[36px] shrink-0 flex"><span className="h-[10px] bg-[#ff3232] block" style={{ width: f[1] }} /></span>
            <span className="w-[92px] text-right text-[20px] font-bold text-[#ff3232] tracking-[0.3px] shrink-0"><Num v={f[2] + "亿"} /></span>
            <span className="flex-1 text-right text-[20px] font-bold text-[#ff3232] pr-[3px]">{f[3]}</span>
          </div>
        ))}
      </div>
      <div className="h-[2px] bg-[#b00000]" />
      <div className="pt-[2px]">
        {T.map((t, i) => (
          <div key={i} className="flex items-center h-[27.05px] whitespace-nowrap text-[20px] font-bold tracking-[0.4px]">
            <span className="w-[107px] pl-[3px] text-[#c0c0c0]">{t[0]}</span>
            <span className="w-[50px] text-right text-[#ff3232]">{t[1]}</span>
            <span className="w-[96px] flex justify-end items-center" style={{ color: t[3] ? "#c000c0" : "#c8c800" }}>{t[2]}<Wan c={t[3] ? "#c000c0" : "#b8b800"} /></span>
            <span className="w-[29px] text-right" style={{ color: t[4] === "S" ? "#00e000" : "#ff3232" }}>{t[4]}</span>
            <span className="flex-1 text-right pr-[5px] text-[#8c8c8c]">{t[5]}</span>
          </div>
        ))}
      </div>
    </div>
  );
}

function Box({ children }: { children: React.ReactNode }) {
  return (
    <svg width={24} height={24} viewBox="0 0 24 24">
      <rect x={1} y={1} width={22} height={22} fill="#fff" stroke="#6aa0ea" strokeWidth={2} />
      {children}
    </svg>
  );
}
function Arrow({ d }: { d: string }) {
  return <svg width={24} height={24} viewBox="0 0 24 24"><path d={d} fill="#fff" stroke="#5a9ae8" strokeWidth={2} /></svg>;
}

const SIDE1: React.ReactNode[] = [
  <Arrow d="M2 12l9-8v5h11v6H11v5z" />,
  <Arrow d="M12 2l8 9h-5v11H9V11H4z" />,
  <Arrow d="M12 22l8-9h-5V2H9v11H4z" />,
  <Box><path d="M4 6h7" stroke="#00a000" strokeWidth={2} /><path d="M13 6h7M13 10h7" stroke="#e02020" strokeWidth={2} /><path d="M4 10h7M4 14h5" stroke="#208020" strokeWidth={2} /><circle cx={16} cy={16} r={5} fill="#d0d0d0" stroke="#808080" /></Box>,
  <Box><path d="M6 5v14M18 5v14" stroke="#e02020" strokeWidth={3} strokeDasharray="2 1" /><path d="M12 5v14" stroke="#2040e0" strokeWidth={3} strokeDasharray="2 1" /></Box>,
  <Box><path d="M3 16l5-4 3 3 5-5 4 1" stroke="#e02020" fill="none" strokeWidth={1.6} /></Box>,
  <Box><path d="M6 6v12M12 4v14M18 5v11" stroke="#303030" /><rect x={4} y={9} width={4} height={6} fill="#e02020" /><rect x={10} y={8} width={4} height={7} fill="#109010" /><rect x={16} y={7} width={4} height={6} fill="#e02020" /></Box>,
  <svg width={24} height={24} viewBox="0 0 24 24"><rect x={6} y={2} width={17} height={15} fill="#fff" stroke="#6aa0ea" strokeWidth={1.6} /><rect x={1} y={6} width={18} height={16} fill="#fff" stroke="#6aa0ea" strokeWidth={1.6} /><path d="M4 11h5M11 11h5M4 14h5M11 14h5M4 17h5M11 17h5" stroke="#606060" /></svg>,
  <Box><text x={3} y={16.5} fontSize={11} fill="#2070d0" fontWeight={700}>F10</text></Box>,
  <Box><rect x={4} y={3} width={7} height={4} fill="#f0c030" /><rect x={11} y={10} width={9} height={4} fill="#f0c030" /><rect x={11} y={16} width={9} height={4} fill="#f0c030" /><path d="M6 7v11h5M6 12h5" stroke="#3080d0" fill="none" /></Box>,
  <Box><text x={4.5} y={18} fontSize={15} fill="#f06a10" fontWeight={700}>自</text></Box>,
  <Box><text x={3} y={16.5} fontSize={11} fill="#2070d0" fontWeight={700}>F12</text></Box>,
  <svg width={24} height={24} viewBox="0 0 24 24"><rect x={1} y={1} width={22} height={22} rx={6} fill="#fff" stroke="#40a090" strokeWidth={1.6} /><text x={5} y={18} fontSize={14} fontStyle="italic" fill="#2060c0" fontWeight={700}>fx</text></svg>,
  <Box><circle cx={12} cy={12} r={6} fill="none" stroke="#2070c0" strokeWidth={3} /></Box>,
];
const SIDE2: React.ReactNode[] = [
  <Box><path d="M3 9l4-2 4 2 4-2 6 2" stroke="#e02020" fill="none" /><path d="M3 13l4-2 4 2 4-2 6 2" stroke="#2040e0" fill="none" /><path d="M3 17l4-2 4 2 4-2 6 2" stroke="#2040e0" fill="none" /></Box>,
  <span className="text-[15px] font-bold text-[#3a5ad0] leading-none">RSI</span>,
  <svg width={24} height={24} viewBox="0 0 24 24"><text x={4} y={22} fontSize={22} fontWeight={700} fill="#e03030">S</text><path d="M12 1l4 4H8z" fill="#e03030" /></svg>,
  <svg width={26} height={26} viewBox="0 0 26 26"><path d="M13 1l5 6h-3v4h4v-3l6 5-6 5v-3h-4v4h3l-5 6-5-6h3v-4H7v3l-6-5 6-5v3h4V7H8z" fill="#1060d0" /></svg>,
  <svg width={24} height={24} viewBox="0 0 24 24"><path d="M19 3l3 3L8 20l-6 2 2-6z" fill="#e8a030" stroke="#a07020" /><path d="M2 22l2-6 4 4z" fill="#f0e0c0" /></svg>,
];
const SIDE3: React.ReactNode[] = [
  <Box><text x={4} y={18} fontSize={15} fill="#2070d0" fontWeight={700}>F5</text></Box>,
  <Box><path d="M6 10a6 6 0 0 1 11-2l2-1v6h-6l2-2a4 4 0 0 0-7 0z" fill="#50b050" /><path d="M18 14a6 6 0 0 1-11 2l-2 1v-6h6l-2 2a4 4 0 0 0 7 0z" fill="#60c060" /></Box>,
];

function Sidebar() {
  const row = "h-[34.57px] flex items-center justify-center shrink-0";
  return (
    <div className="flex-1 bg-[#f0f0f0] flex flex-col items-stretch -mt-[3px] overflow-hidden text-[18px] text-[#2a55a8] h-[1325px]">
      {SIDE1.map((n, i) => <div key={i} className={row}>{n}</div>)}
      <div className="h-[11px] flex items-center px-[5px] shrink-0"><div className="h-[2px] w-full bg-[#b8b8b8]" /></div>
      {SIDE2.map((n, i) => <div key={i} className={row}>{n}</div>)}
      <div className="h-[11px] flex items-center px-[5px] shrink-0"><div className="h-[2px] w-full bg-[#b8b8b8]" /></div>
      <div className="h-[3px] shrink-0" />
      {SIDE3.map((n, i) => <div key={i} className={row}>{n}</div>)}
      {["1", "5", "15", "30", "60"].map((n) => <div key={n} className={row}>{n}</div>)}
      <div className={row + " bg-white border-t-2 border-l-2 border-[#c8c8c8]"}>日</div>
      {["周", "月", "N", "多", "季", "年"].map((n) => <div key={n} className={row}>{n}</div>)}
    </div>
  );
}

const STATUS: [string, number, string, string][] = [
  ["上证", 54, "#222", "text-[22px]"], ["3212.50", 102, "#f00000", ""], ["11.24", 76, "#f00000", ""], ["0.35%", 85, "#f00000", ""], ["3333亿", 96, "#111", ""],
  ["深证", 52, "#222", "text-[22px]"], ["10909.7", 102, "#f00000", ""], ["13.07", 75, "#f00000", ""], ["0.12%", 86, "#f00000", ""], ["4872亿", 99, "#111", ""],
  ["中小", 51, "#222", "text-[22px]"], ["7119.85", 93, "#109010", ""], ["-18.66", 83, "#109010", ""], ["-0.26%", 86, "#109010", ""], ["500.0亿", 98, "#111", ""],
];

function StatusBar() {
  return (
    <div className="flex items-center h-[37px] pt-[2px] bg-[#f0f0f0] whitespace-nowrap text-[20px] font-bold shrink-0 overflow-hidden">
      <svg width={22} height={26} viewBox="0 0 22 26" className="ml-[1px] mr-[1px] shrink-0">
        <rect x={1} y={1} width={20} height={24} rx={3} fill="#f0c040" stroke="#b08020" />
        <rect x={5} y={6} width={12} height={14} fill="#fff0b0" stroke="#b08020" />
      </svg>
      {STATUS.map((s) => (
        <span key={s[0]} className={"shrink-0 " + s[3]} style={{ width: s[1], color: s[2], fontWeight: s[3] ? 400 : 700 }}><Num v={s[0]} /></span>
      ))}
      <span className="h-full border-l-2 border-[#c8c8c8] pl-[6px] ml-[20px] flex items-center text-[22px] font-normal text-[#222]">总成交<span className="font-bold ml-[12px] text-[20px] text-[#111]">8</span></span>
    </div>
  );
}

function Watermark() {
  return (
    <div className="absolute left-[1360px] top-[1314px] w-[800px] h-[81px] bg-[#7fa9d8] flex items-center overflow-hidden z-10 whitespace-nowrap">
      <span className="ml-[15px] w-[305px] text-[56px] font-black leading-none text-[#15108f] tracking-[-0.5px] font-['Noto_Sans_CJK_SC',sans-serif]">公式指标网</span>
      <svg width={80} height={80} viewBox="0 0 80 80" className="shrink-0">
        <path d="M8 56A34 34 0 1 1 74 36" fill="none" stroke="#d96a50" strokeWidth={9} />
        <path d="M74 42A34 34 0 0 1 40 75" fill="none" stroke="#ecca48" strokeWidth={9} />
        <text x={40} y={58} fontSize={50} fontWeight={900} textAnchor="middle" fill="#ecca48" fontFamily="Noto Sans CJK SC">美</text>
        <circle cx={40} cy={8} r={5} fill="#ecca48" />
      </svg>
      <span className="ml-[28px] text-[53px] font-bold leading-none text-white font-['DejaVu_Serif',serif] tracking-[-1.2px]">www.9m8.cn</span>
    </div>
  );
}

export default function App() {
  return (
    <div className="relative w-[2160px] h-[1395px] overflow-hidden bg-black flex flex-col font-['Liberation_Sans','Noto_Sans_CJK_SC',sans-serif]">
      <TitleBar />
      <div className="flex h-[1322px] shrink-0">
        <div className="w-[1785px] shrink-0 flex flex-col overflow-hidden">
          <ToolBar />
          <Legend />
          <PriceChart />
          <div className="h-[2px] w-[1785px] bg-[#b00000] shrink-0" />
          <div className="flex items-center h-[27px] w-[1712px] text-[17px] whitespace-nowrap shrink-0 border-r-2 border-[#b00000] tracking-[0.4px]">
            <span className="ml-[3px]"><Circle /></span>
            <span className="ml-[5px] w-[205px] text-[#d0d0d0] flex items-center">VOLUME: 1358712.63<Dn /></span>
            <span className="w-[166px] text-[#d0d0d0] flex items-center">MA5: 1138502.50<Up /></span>
            <span className="text-[#e8e800] flex items-center">MA10: 1160525.13<Up /></span>
          </div>
          <VolumeChart />
          <AxisRow />
          <Tabs items={TAB1} right />
          <Tabs items={TAB2} />
        </div>
        <RightPanel />
        <Sidebar />
      </div>
      <StatusBar />
      <Watermark />
    </div>
  );
}
